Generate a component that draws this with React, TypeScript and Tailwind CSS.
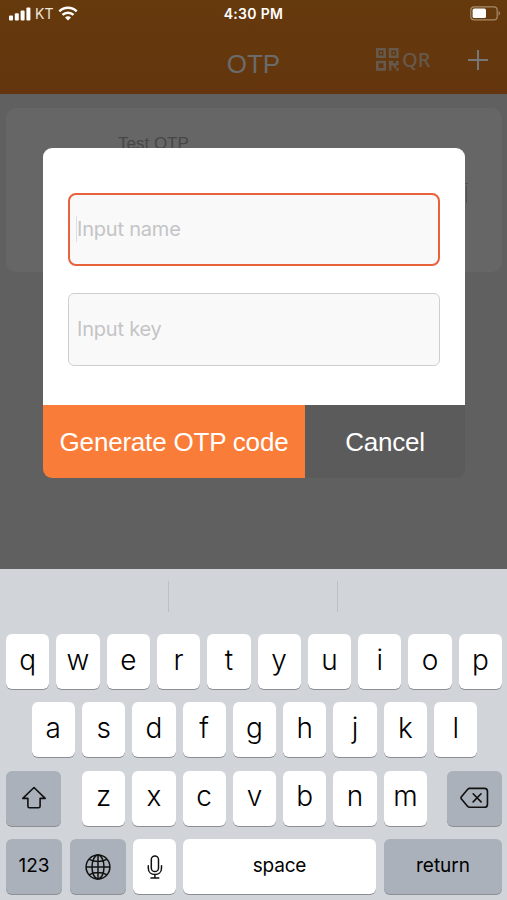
import type React from 'react';
import { useState } from 'react';

const ROW_1 = ['q', 'w', 'e', 'r', 't', 'y', 'u', 'i', 'o', 'p'];
const ROW_2 = ['a', 's', 'd', 'f', 'g', 'h', 'j', 'k', 'l'];
const ROW_3 = ['z', 'x', 'c', 'v', 'b', 'n', 'm'];

const KEY = 'flex h-[55px] shrink-0 items-center justify-center rounded-md shadow-[0_1px_0_#8b8e92] text-black';

function SignalIcon() {
  return (
    <svg width="22" height="14" viewBox="0 0 22 14" fill="white">
      <rect x="0" y="8.5" width="4" height="5" rx="1" />
      <rect x="5.8" y="6.3" width="4" height="7.2" rx="1" />
      <rect x="11.6" y="3.6" width="4" height="9.9" rx="1" />
      <rect x="17.4" y="0.4" width="4" height="13.1" rx="1" />
    </svg>
  );
}

function WifiIcon() {
  return (
    <svg width="20" height="15" viewBox="0 0 20 15" fill="none" stroke="white" strokeWidth="2.5">
      <path d="M1.3 5.4a12.4 12.4 0 0 1 17.4 0" />
      <path d="M4.5 8.9a7.8 7.8 0 0 1 11 0" />
      <path d="M10 14.6l-3-3.1a4.2 4.2 0 0 1 6 0z" fill="white" stroke="none" />
    </svg>
  );
}

function BatteryIcon() {
  return (
    <svg width="31" height="15" viewBox="0 0 31 15" fill="none">
      <rect x="0.8" y="0.8" width="26.4" height="13" rx="3.4" stroke="#a88a6c" strokeWidth="1.2" />
      <rect x="2.6" y="2.6" width="13.4" height="9.4" rx="1.6" fill="white" />
      <path d="M28.6 5v4.6c1.9-.8 1.9-3.8 0-4.6z" fill="#a88a6c" />
    </svg>
  );
}

function QrIcon() {
  return (
    <svg width="23" height="23" viewBox="0 0 23 23" fill="#66594c">
      <path fillRule="evenodd" d="M0 0h10v10H0zM2.6 2.6v4.8h4.8V2.6zM12.7 0h10v10h-10zM15.3 2.6v4.8h4.8V2.6zM0 12.7h10v10H0zM2.6 15.3v4.8h4.8v-4.8z" />
      <path d="M4 4h2v2H4zM16.7 4h2v2h-2zM12.7 12.7h4.6v2.5h2.6v-2.5h2.8v4.6h-2.5v2.6h2.5v2.8h-2.4v-2.4h-2.5v-2.6h-2.4v5h-2.1z" />
    </svg>
  );
}

function ShiftIcon() {
  return (
    <svg width="26" height="24" viewBox="0 0 26 24" fill="none" stroke="#111" strokeWidth="1.6" strokeLinejoin="round">
      <path d="M13 1.5L1.8 12.4h5.1v7.8q0 1.5 1.5 1.5h9.2q1.5 0 1.5-1.5v-7.8h5.1z" />
    </svg>
  );
}

function BackspaceIcon() {
  return (
    <svg width="29" height="22" viewBox="0 0 30 22" fill="none" stroke="#111" strokeWidth="1.7" strokeLinecap="round" strokeLinejoin="round">
      <path d="M10 1h15.2q3.2 0 3.2 3.2v13.2q0 3.2-3.2 3.2H10q-1.2 0-2-.9L1.5 12q-.9-1.1 0-2.2L8 1.9q.8-.9 2-.9z" />
      <path d="M13.6 6.6l8.2 8.4M21.8 6.6L13.6 15" />
    </svg>
  );
}

function GlobeIcon() {
  return (
    <svg width="26" height="26" viewBox="0 0 26 26" fill="none" stroke="#111" strokeWidth="1.5">
      <circle cx="13" cy="13" r="11.9" />
      <ellipse cx="13" cy="13" rx="6" ry="11.9" />
      <path d="M13 1v24M1 13h24M4.2 5.3q8.8 4.4 17.6 0M4.2 20.7q8.8-4.4 17.6 0" />
    </svg>
  );
}

function MicIcon() {
  return (
    <svg width="16" height="24" viewBox="0 0 16 24" fill="none" stroke="#111" strokeWidth="1.5" strokeLinecap="round">
      <rect x="4.3" y="1" width="7.2" height="15.5" rx="3.6" />
      <path d="M1.3 10.8v2.4c0 8.4 13.2 8.4 13.2 0v-2.4M7.9 19.6v3.2M4 22.9h7.8" />
    </svg>
  );
}

function LetterKey({ label }: { label: string }) {
  return (
    <button className={`${KEY} w-[43.3px] bg-white pb-1 text-[28px] leading-none font-[350]`}>{label}</button>
  );
}

function DarkKey({ className, children }: { className: string; children: React.ReactNode }) {
  return <button className={`${KEY} bg-[#abb1ba] ${className}`}>{children}</button>;
}

function Header() {
  return (
    <header className="h-[94px] bg-linear-to-b from-[#653a0c] to-[#64350e]">
      <div className="grid h-[27px] grid-cols-3 items-center pr-[6px] pl-[9px] text-white">
        <div className="flex items-center">
          <SignalIcon />
          <span className="ml-[4px] w-[19px] text-[14px] text-[#eee5dc]">KT</span>
          <span className="ml-[4px]"><WifiIcon /></span>
        </div>
        <span className="pr-[3px] text-center text-[14px] font-semibold tracking-[0.3px] whitespace-nowrap">4:30 PM</span>
        <div className="flex justify-end"><BatteryIcon /></div>
      </div>
      <div className="grid h-[67px] grid-cols-3 px-[19px] text-[#6b6b6b]">
        <span />
        <h1 className="pt-[19px] text-center font-['Liberation_Sans',sans-serif] text-[26px] leading-[36px]">OTP</h1>
        <div className="flex items-start justify-end pt-[21px]">
          <QrIcon />
          <span className="ml-[3px] w-[28px] font-['Noto_Sans',sans-serif] text-[20px] leading-[23px] font-medium text-[#66594c]">QR</span>
          <svg className="mt-[2px] ml-[38px]" width="20" height="20" viewBox="0 0 20 20" stroke="#777" strokeWidth="2">
            <path d="M10 0v20M0 10h20" />
          </svg>
        </div>
      </div>
    </header>
  );
}

function OtpDialog() {
  const [name, setName] = useState('');
  const [key, setKey] = useState('');

  return (
    <div className="absolute top-[148px] left-[43px] w-[422px] overflow-hidden rounded-[9px]">
      <div className="flex flex-col gap-[27px] bg-white px-[25px] pt-[45px] pb-[39px]">
        <div className="flex h-[73px] items-center rounded-lg border-[2.5px] border-[#e8623c] bg-[#f9f9f9] pb-[2px] pl-[6px]">
          {/* Faint caret at the start of the focused field */}
          <span className="-mr-px h-[26px] w-px bg-[#dcdeea]" />
          <input
            value={name}
            onChange={(e) => setName(e.target.value)}
            placeholder="Input name"
            className="w-full pl-px text-[20px] tracking-[-0.2px] outline-none placeholder:text-[#c4c4c6]"
          />
        </div>
        <div className="flex h-[73px] items-center rounded-md border border-[#cfcfcf] bg-[#f9f9f9] pb-[2px] pl-[8px]">
          <input
            value={key}
            onChange={(e) => setKey(e.target.value)}
            placeholder="Input key"
            className="w-full text-[20px] tracking-[-0.2px] outline-none placeholder:text-[#c4c4c6]"
          />
        </div>
      </div>
      <div className="flex h-[73px] font-['Liberation_Sans',sans-serif] text-[26px] tracking-[-0.2px] text-white">
        <button className="w-[262px] bg-[#f97d38] pt-[2px] whitespace-nowrap">Generate OTP code</button>
        <button className="flex-1 bg-[#5b5b5b] pt-[2px]">Cancel</button>
      </div>
    </div>
  );
}

function Keyboard() {
  return (
    <section className="h-[331px] bg-[#d1d5d9]">
      <div className="flex h-[65px] pt-[12px]">
        <span className="h-[31px] w-[169px] border-r border-[#bcc0c5]" />
        <span className="h-[31px] w-[169px] border-r border-[#bcc0c5]" />
      </div>
      <div className="flex flex-col gap-[13.4px]">
        <div className="flex justify-center gap-[7px] pl-px">
          {ROW_1.map((k) => <LetterKey key={k} label={k} />)}
        </div>
        <div className="flex justify-center gap-[7px] pl-[2px]">
          {ROW_2.map((k) => <LetterKey key={k} label={k} />)}
        </div>
        <div className="flex justify-between pr-[5px] pl-[6px]">
          <DarkKey className="w-[55px]"><ShiftIcon /></DarkKey>
          <div className="flex gap-[7px] pl-px">
            {ROW_3.map((k) => <LetterKey key={k} label={k} />)}
          </div>
          <DarkKey className="w-[55px]"><BackspaceIcon /></DarkKey>
        </div>
        <div className="flex pl-[6px]">
          <DarkKey className="w-[56px] text-[19px]">123</DarkKey>
          <DarkKey className="ml-[8px] w-[56px]"><GlobeIcon /></DarkKey>
          <button className={`${KEY} ml-[7px] w-[43px] bg-white`}><MicIcon /></button>
          <button className={`${KEY} ml-[7px] w-[193px] bg-white pb-px text-[19px] tracking-[-0.2px]`}>space</button>
          <DarkKey className="ml-[8px] w-[118px] pb-px text-[19px]">return</DarkKey>
        </div>
      </div>
    </section>
  );
}

export default function App() {
  return (
    <div className="relative flex h-[900px] w-[507px] flex-col overflow-hidden bg-[#606060] font-[Inter,sans-serif]">
      <Header />
      <main className="flex-1 pt-[14px] pr-[5px] pl-[6px]">
        <div className="flex h-[164px] justify-between rounded-[10px] bg-[#666] pt-[25px] pl-[112px] font-['Liberation_Sans',sans-serif] text-[#464646]">
          <span className="pt-px text-[17px] leading-[20px]">Test OTP</span>
          {/* Edge of the card's trash icon, mostly hidden by the dialog */}
          <span className="mt-[50px] mr-[34px] flex w-[3px] flex-col items-end gap-[2px]">
            <span className="h-px w-full bg-[#505050]" />
            <span className="mr-px h-[17px] w-px bg-[#505050]" />
          </span>
        </div>
      </main>
      <Keyboard />
      <OtpDialog />
    </div>
  );
}
